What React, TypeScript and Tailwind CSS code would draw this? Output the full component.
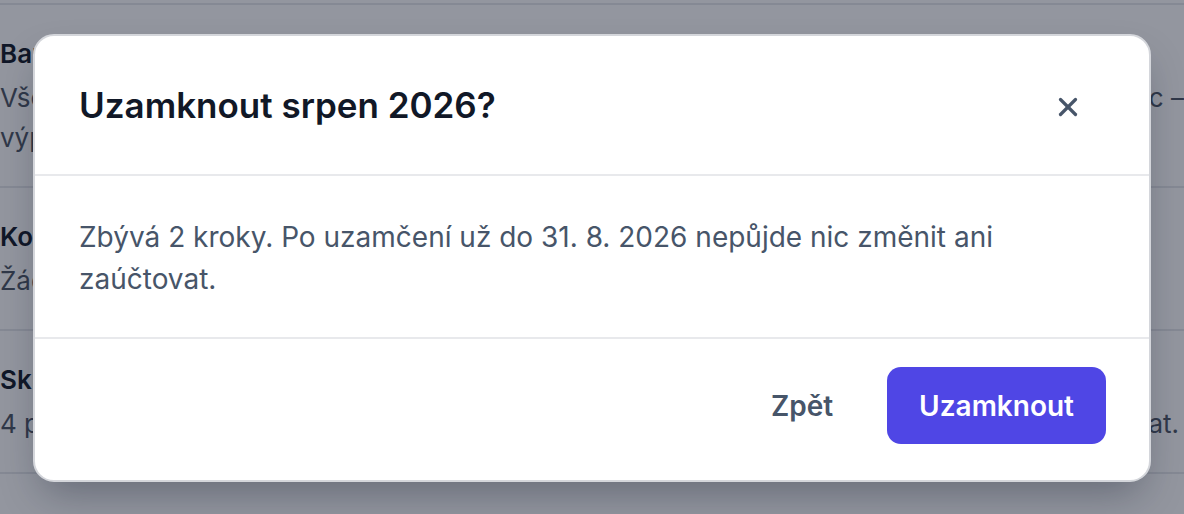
import React from "react";
import { X } from "lucide-react";

function Line({ left, right }: { left: string; right?: string }) {
  return (
    <div className="flex justify-between whitespace-nowrap overflow-hidden">
      <span>{left}</span>
      {right ? <span>{right}</span> : null}
    </div>
  );
}

export default function App() {
  return (
    <div
      className="relative w-[1184px] h-[514px] overflow-hidden bg-white"
      style={{ fontFamily: "Inter, 'Noto Sans', sans-serif" }}
    >
      {/* page behind */}
      <div className="pt-[3px]">
        <div className="border-t-2 border-[#e5e7eb]" />
        <div className="pt-[31px] pb-[28px] border-b-2 border-[#e5e7eb]">
          <div className="text-[26px] leading-[36px] font-semibold text-[#111827]">
            Bankovní výpisy
          </div>
          <div className="mt-[6px] text-[26px] leading-[40px] text-[#4b5563]">
            <Line left="Všechny pohyby na účtech jsou spárované s doklady za tento" right="měsíc –" />
            <Line left="výpisy jsou kompletní." />
          </div>
        </div>
        <div className="pt-[31px] pb-[28px] border-b-2 border-[#e5e7eb]">
          <div className="text-[26px] leading-[36px] font-semibold text-[#111827]">
            Kontrola dokladů
          </div>
          <div className="mt-[6px] text-[26px] leading-[40px] text-[#4b5563]">
            <Line left="Žádné doklady nečekají na schválení." />
          </div>
        </div>
        <div className="pt-[31px] pb-[28px] border-b-2 border-[#e5e7eb]">
          <div className="text-[26px] leading-[36px] font-semibold text-[#111827]">
            Skladové pohyby
          </div>
          <div className="mt-[6px] pr-[5px] text-[26px] leading-[40px] text-[#4b5563]">
            <Line left="4 příjemky a 2 výdejky ještě nejsou" right="zaúčtovat." />
          </div>
        </div>
      </div>

      {/* overlay */}
      <div className="absolute inset-0 bg-slate-900/45 flex items-start justify-center pt-[34px] px-[33px]">
        <div className="w-full bg-white rounded-[21px] border-2 border-[#d4d6db] shadow-[0_20px_40px_-10px_rgba(15,23,42,0.35)] overflow-hidden">
          <div className="flex items-center justify-between h-[140px] pl-[44px] pr-[66px] border-b-2 border-[#e8e9ec]">
            <h2 className="text-[35px] leading-[44px] font-semibold text-[#111827]">
              Uzamknout srpen 2026?
            </h2>
            <button className="text-[#475569] mt-[4px]">
              <X size={30} strokeWidth={2.6} />
            </button>
          </div>
          <div className="pl-[44px] pr-[44px] pt-[40px] pb-[37px] border-b-2 border-[#e8e9ec] text-[28px] leading-[42px] text-[#475569]">
            Zbývá 2 kroky. Po uzamčení už do 31. 8. 2026 nepůjde nic změnit ani
            <br />
            zaúčtovat.
          </div>
          <div className="flex items-center justify-end gap-[22px] pr-[43px] pt-[28px] pb-[36px]">
            <button className="h-[77px] px-[32px] text-[28px] font-semibold text-[#475569]">
              Zpět
            </button>
            <button className="h-[77px] px-[32px] rounded-[14px] bg-[#4f46e5] text-[28px] font-semibold text-white">
              Uzamknout
            </button>
          </div>
        </div>
      </div>
    </div>
  );
}
